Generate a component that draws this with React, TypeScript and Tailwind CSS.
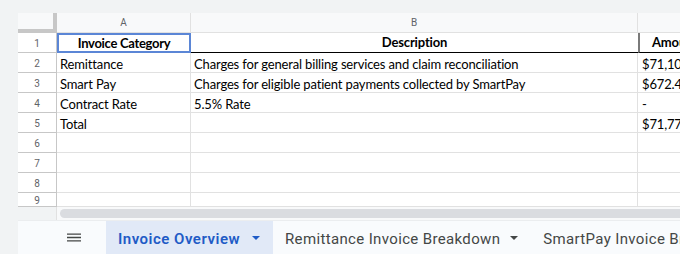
const rows = [
  { a: "Invoice Category", b: "Description", c: "Amount", head: true },
  { a: "Remittance", b: "Charges for general billing services and claim reconciliation", c: "$71,10" },
  { a: "Smart Pay", b: "Charges for eligible patient payments collected by SmartPay", c: "$672.4" },
  { a: "Contract Rate", b: "5.5% Rate", c: "-" },
  { a: "Total", b: "", c: "$71,77" },
  { a: "", b: "", c: "" },
  { a: "", b: "", c: "" },
  { a: "", b: "", c: "" },
  { a: "", b: "", c: "" },
]

function Caret({ className }: { className: string }) {
  return (
    <svg width="8" height="4" viewBox="0 0 8 4" className={className}>
      <path d="M0 0h8L4 4z" fill="currentColor" />
    </svg>
  )
}

export default function App() {
  return (
    <div className="w-[680px] h-[254px] overflow-hidden bg-[#f1f3f4] pl-[18px] pt-[13px] flex flex-col font-['Lato',sans-serif]">
      <div className="bg-white flex flex-col w-[700px] shrink-0">
        {/* column letters */}
        <div className="flex h-[20px] text-[10px] text-[#5f6368] font-['Roboto',sans-serif]">
          <div className="w-[39px] shrink-0 bg-[#f8f9fa] border-r-4 border-b-4 border-[#c7c7c7]" />
          <div className="w-[134px] shrink-0 flex items-center justify-center border-r border-b border-[#e1e1e1] bg-[#f8f9fa]">A</div>
          <div className="w-[447px] shrink-0 flex items-center justify-center border-r border-b border-[#e1e1e1] bg-[#f8f9fa]">B</div>
          <div className="flex-1 border-b border-[#e1e1e1] bg-[#f8f9fa]" />
        </div>

        {rows.map((r, i) => (
          <div
            key={i}
            className={`flex text-[13px] leading-[13px] tracking-[-0.15px] text-black ${i === 8 ? "h-[14px]" : "h-[20px]"}`}
          >
            <div className="w-[39px] shrink-0 flex items-center justify-center pt-[2px] text-[10px] tracking-normal text-[#5f6368] bg-white border-r border-b border-[#c7c7c7] font-['Roboto',sans-serif]">
              {i + 1}
            </div>
            {r.head ? (
              <>
                <div className="w-[134px] shrink-0 flex items-center justify-center font-bold tracking-[-0.3px] border-2 border-[#5b86d6]">
                  {r.a}
                </div>
                <div className="w-[447px] shrink-0 flex items-center justify-center font-bold border-b border-black">
                  {r.b}
                </div>
                <div className="flex-1 flex items-center pl-[12px] font-bold border-l-2 border-l-[#7a7a7a] border-b border-black">
                  {r.c}
                </div>
              </>
            ) : (
              <>
                <div className="w-[134px] shrink-0 flex items-end pb-[1px] pl-[3px] border-r border-b border-[#e1e1e1] whitespace-nowrap">
                  {r.a}
                </div>
                <div className="w-[447px] shrink-0 flex items-end pb-[1px] pl-[3px] border-r border-b border-[#e1e1e1] whitespace-nowrap">
                  {r.b}
                </div>
                <div className="flex-1 flex items-end pb-[1px] pl-[4px] border-b border-[#e1e1e1] whitespace-nowrap">
                  {r.c}
                </div>
              </>
            )}
          </div>
        ))}

        {/* horizontal scrollbar */}
        <div className="flex h-[13px] bg-[#f8f9fa]">
          <div className="w-[39px] shrink-0 border-r border-[#e1e1e1] bg-[#f1f3f4]" />
          <div className="flex-1 flex items-center pl-[3px]">
            <div className="h-[9px] w-full rounded-full bg-[#dadce0]" />
          </div>
        </div>
      </div>

      {/* sheet tabs */}
      <div className="flex-1 flex items-stretch bg-[#f9fbfd] border-t border-[#ebedef] font-['Roboto',sans-serif] text-[15px] tracking-[0.35px] whitespace-nowrap">
        <div className="w-[88px] shrink-0 flex items-center justify-center pl-[24px]">
          <svg width="14" height="9" viewBox="0 0 14 9" className="text-[#444746]">
            <path d="M0 1.1h14M0 4.5h14M0 7.9h14" stroke="currentColor" strokeWidth="1.4" />
          </svg>
        </div>
        <div className="shrink-0 flex items-center gap-[12px] pl-[12px] pr-[13px] pt-[3px] bg-[#e1e9f7] text-[#1f5bc6] font-semibold tracking-[0.5px]">
          Invoice Overview
          <Caret className="text-[#1f5bc6] mb-[2px]" />
        </div>
        <div className="shrink-0 flex items-center gap-[10px] pl-[12px] pr-[13px] pt-[3px] text-[#444746]">
          Remittance Invoice Breakdown
          <Caret className="text-[#444746] mb-[2px]" />
        </div>
        <div className="shrink-0 flex items-center pl-[12px] pt-[3px] text-[#444746]">
          SmartPay Invoice Breakdown
        </div>
      </div>
    </div>
  )
}
